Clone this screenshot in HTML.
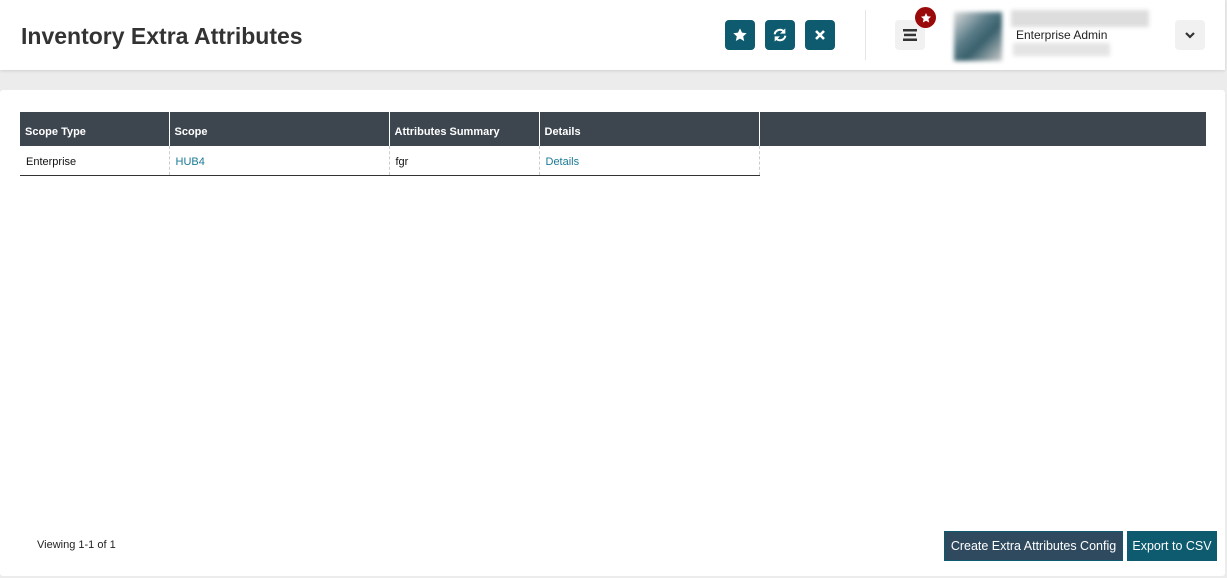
<!DOCTYPE html>
<html><head><meta charset="utf-8"><style>
*{box-sizing:border-box;margin:0;padding:0}
body{width:1227px;height:578px;background:#ececec;font-family:"Liberation Sans",sans-serif;position:relative;overflow:hidden}
.hdr{position:absolute;left:0;top:0;width:1225px;height:70px;background:#fff;box-shadow:0 1px 3px rgba(0,0,0,.12)}
.title{position:absolute;left:21px;top:23px;font-size:23px;font-weight:bold;color:#333}
.ib{position:absolute;top:20px;width:30px;height:30px;background:#0e5a6e;border-radius:4px;display:flex;align-items:center;justify-content:center}
.sep{position:absolute;left:865px;top:10px;width:1px;height:50px;background:#e5e5e5}
.gb{position:absolute;width:30px;height:30px;background:#f1f1f1;border-radius:4px;display:flex;align-items:center;justify-content:center}
.card{position:absolute;left:0;top:90px;width:1225px;height:486px;background:#fff;border-radius:3px}
table{position:absolute;left:20px;top:22px;border-collapse:collapse;font-size:11px}
th{background:#3d454f;color:#fff;text-align:left;height:34px;padding:6px 5px 0;font-weight:bold;border-right:1px solid #fff}
td{height:29px;padding:3px 6px 0;border-right:1px dashed #ccc;border-bottom:1px solid #333;color:#111}
.hbar{position:absolute;left:20px;top:22px;width:1186px;height:34px;background:#3d454f}
a{color:#1a7a96;text-decoration:none}
.btn{position:absolute;top:441px;height:30px;color:#fff;font-size:12.5px;display:flex;align-items:center;justify-content:center;border:1px solid #0e5a6e}
</style></head><body>
<div class="hdr">
<div class="title">Inventory Extra Attributes</div>
<div class="ib" style="left:725px"><svg width="16" height="16" viewBox="0 0 24 24"><path fill="#fff" d="M12 2l3 6.5 7 .8-5.2 4.8 1.5 7L12 17.5 5.7 21l1.5-7L2 9.3l7-.8z"/></svg></div>
<div class="ib" style="left:765px"><svg width="16" height="16" viewBox="0 0 24 24" fill="none" stroke="#fff" stroke-width="3"><path d="M4 11a8 8 0 0 1 14-4"/><path d="M20 13a8 8 0 0 1-14 4"/><path fill="#fff" stroke="none" d="M20 2v8h-8z M4 22v-8h8z"/></svg></div>
<div class="ib" style="left:805px"><svg width="12" height="12" viewBox="0 0 12 12" stroke="#fff" stroke-width="2.6"><path d="M2 2l8 8M10 2l-8 8"/></svg></div>
<div class="sep"></div>
<div class="gb" style="left:895px;top:20px"><svg width="14" height="12"><rect y="0" width="14" height="2.5" fill="#333"/><rect x="1" y="4.7" width="12" height="2.5" fill="#333"/><rect y="9.5" width="14" height="2.5" fill="#333"/></svg></div>
<div style="position:absolute;left:915px;top:7px;width:21px;height:21px;border-radius:50%;background:#9b0a0a;display:flex;align-items:center;justify-content:center"><svg width="12" height="12" viewBox="0 0 24 24"><path fill="#fff" d="M12 2l3 6.5 7 .8-5.2 4.8 1.5 7L12 17.5 5.7 21l1.5-7L2 9.3l7-.8z"/></svg></div>
<div style="position:absolute;left:954px;top:12px;width:48px;height:49px;background:linear-gradient(135deg,#ddd,#5a7c88 40%,#38606c 60%,#ccc);filter:blur(2px)"></div>
<div style="position:absolute;left:1011px;top:10px;width:138px;height:17px;background:#ddd;filter:blur(2px)"></div>
<div style="position:absolute;left:1016px;top:28px;font-size:12px;color:#222">Enterprise Admin</div>
<div style="position:absolute;left:1013px;top:43px;width:97px;height:13px;background:#e4e4e4;filter:blur(2px)"></div>
<div class="gb" style="left:1175px;top:20px"><svg width="10" height="8" viewBox="0 0 10 8"><path d="M1 2l4 4 4-4" stroke="#333" stroke-width="2.2" fill="none"/></svg></div>
</div>
<div class="card">
<div class="hbar"></div>
<table>
<tr><th style="width:149px">Scope Type</th><th style="width:220px">Scope</th><th style="width:150px">Attributes Summary</th><th style="width:220px">Details</th></tr>
<tr><td>Enterprise</td><td><a>HUB4</a></td><td>fgr</td><td><a>Details</a></td></tr>
</table>
<div style="position:absolute;left:37px;top:449px;font-size:11px;color:#222">Viewing 1-1 of 1</div>
<div class="btn" style="left:944px;width:179px;background:#2f4a5e">Create Extra Attributes Config</div>
<div class="btn" style="left:1127px;width:90px;background:#0e5a6e">Export to CSV</div>
</div>
</body></html>
